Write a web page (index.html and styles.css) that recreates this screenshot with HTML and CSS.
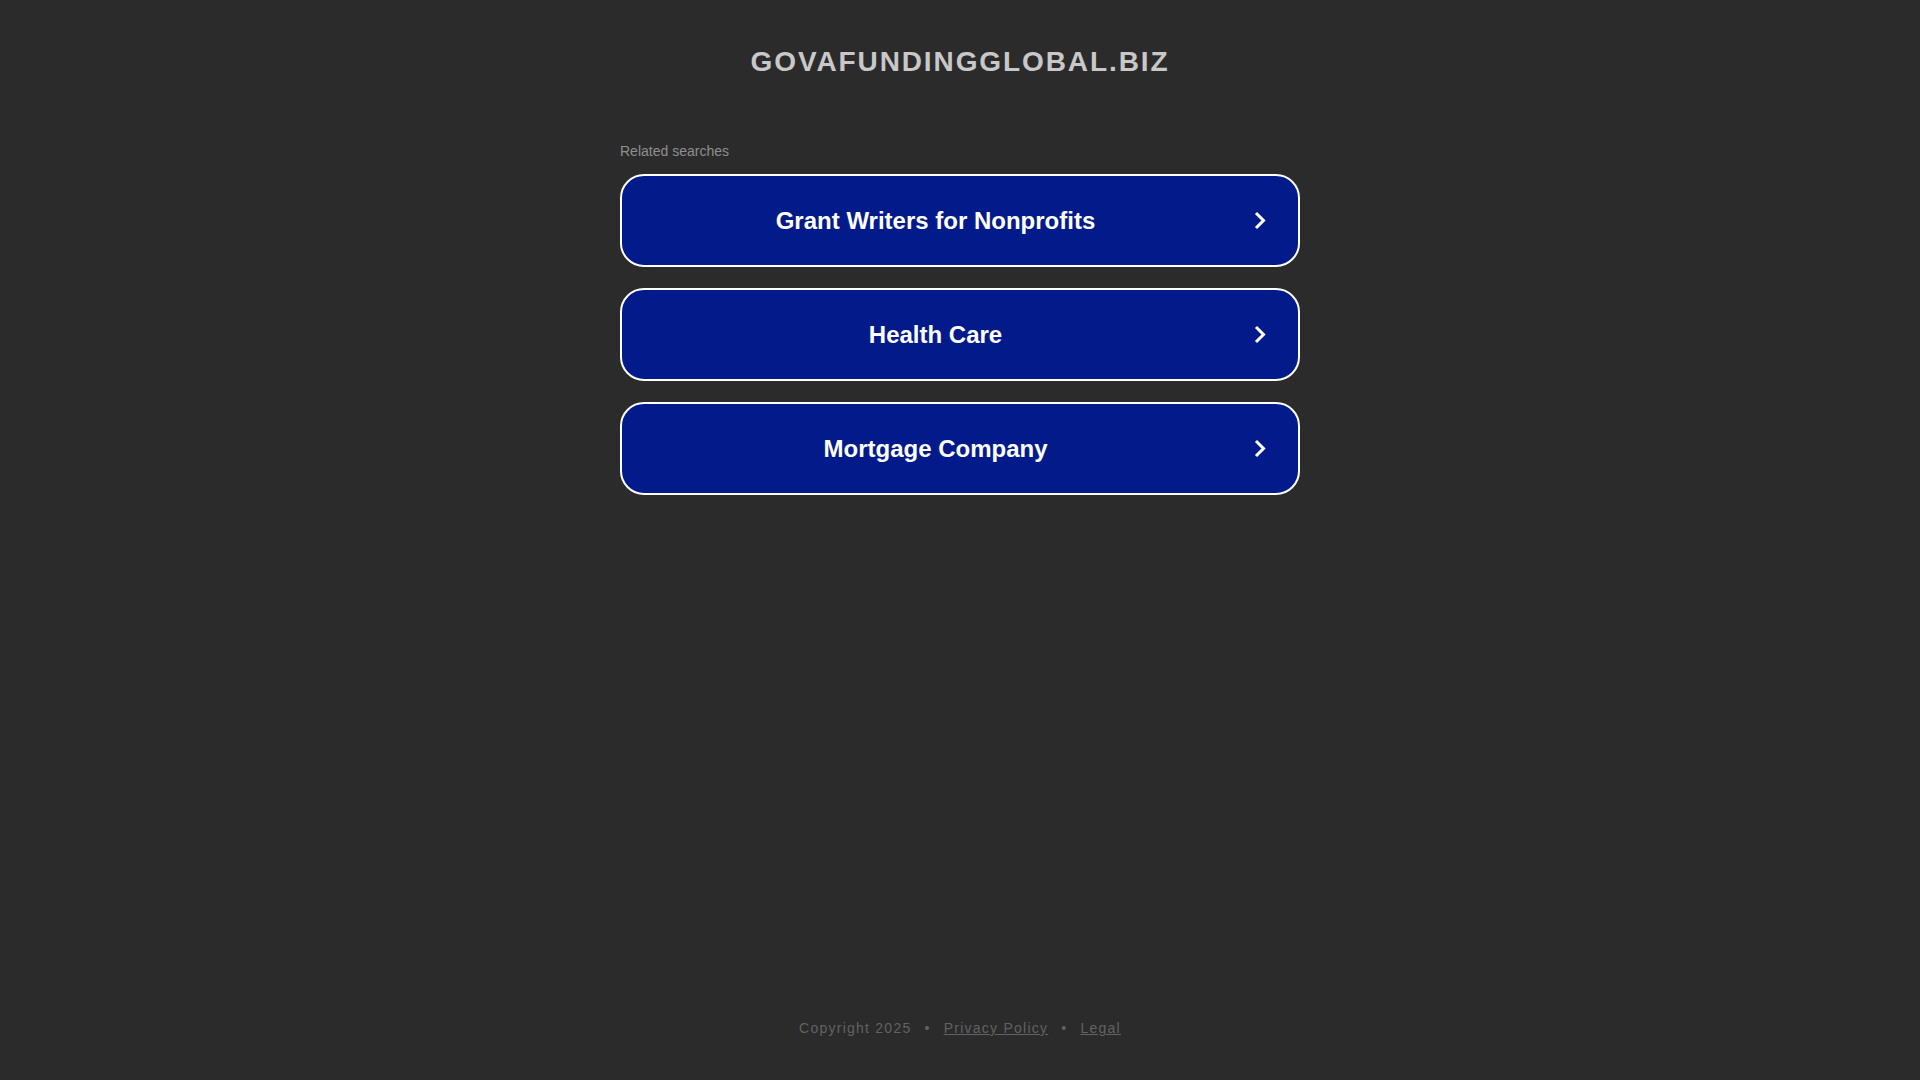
FILE: index.html
```html
<!DOCTYPE html>
<html lang="en">
<head>
<meta charset="utf-8">
<title>govafundingglobal.biz</title>
<link rel="stylesheet" href="styles.css">
</head>
<body>
<div class="page">
  <header class="header">
    <h1 class="domain">govafundingglobal.biz</h1>
  </header>
  <main class="main">
    <div class="related-label">Related searches</div>
    <div class="links">
      <a class="link-btn" href="#">
        <span class="link-text">Grant Writers for Nonprofits</span>
        <svg class="chevron" viewBox="0 0 12 19" width="12" height="19"><polyline points="2,2 9.5,9.5 2,17" fill="none" stroke="#ffffff" stroke-width="3"/></svg>
      </a>
      <a class="link-btn" href="#">
        <span class="link-text">Health Care</span>
        <svg class="chevron" viewBox="0 0 12 19" width="12" height="19"><polyline points="2,2 9.5,9.5 2,17" fill="none" stroke="#ffffff" stroke-width="3"/></svg>
      </a>
      <a class="link-btn" href="#">
        <span class="link-text">Mortgage Company</span>
        <svg class="chevron" viewBox="0 0 12 19" width="12" height="19"><polyline points="2,2 9.5,9.5 2,17" fill="none" stroke="#ffffff" stroke-width="3"/></svg>
      </a>
    </div>
  </main>
  <footer class="footer">
    <span class="copy">Copyright 2025</span>
    <span class="dot">•</span>
    <a class="foot-link" href="#">Privacy Policy</a>
    <span class="dot">•</span>
    <a class="foot-link" href="#">Legal</a>
  </footer>
</div>
</body>
</html>
```
FILE: styles.css
```css
html, body {
  margin: 0;
  padding: 0;
  background: #2b2b2b;
}
body {
  font-family: "Liberation Sans", Arial, sans-serif;
}
.page {
  min-height: 100vh;
  display: flex;
  flex-direction: column;
  align-items: center;
}
.header {
  padding-top: 46px;
  text-align: center;
}
.domain {
  margin: 0;
  font-size: 28px;
  line-height: 32px;
  font-weight: bold;
  letter-spacing: 1.9px;
  text-transform: uppercase;
  color: #c8c8c8;
}
.main {
  width: 680px;
  margin-top: 65px;
}
.related-label {
  font-size: 14px;
  line-height: 16px;
  color: #8f8f8f;
  margin-bottom: 15px;
}
.links {
  display: flex;
  flex-direction: column;
  gap: 21px;
}
.link-btn {
  box-sizing: border-box;
  height: 93px;
  display: flex;
  align-items: center;
  background: #021a8a;
  border: 2px solid #ffffff;
  border-radius: 24px;
  padding: 0 32px 0 0;
  text-decoration: none;
  color: #ffffff;
}
.link-text {
  flex: 1;
  text-align: center;
  font-size: 24px;
  font-weight: bold;
  line-height: 28px;
}
.chevron {
  display: block;
  margin-left: 5px;
}
.footer {
  margin-top: auto;
  padding-bottom: 44px;
  display: flex;
  align-items: center;
  font-size: 14px;
  line-height: 16px;
  letter-spacing: 1.25px;
  color: #626262;
}
.dot {
  margin: 0 13px;
}
.foot-link {
  color: #626262;
  text-decoration: underline;
}
```
